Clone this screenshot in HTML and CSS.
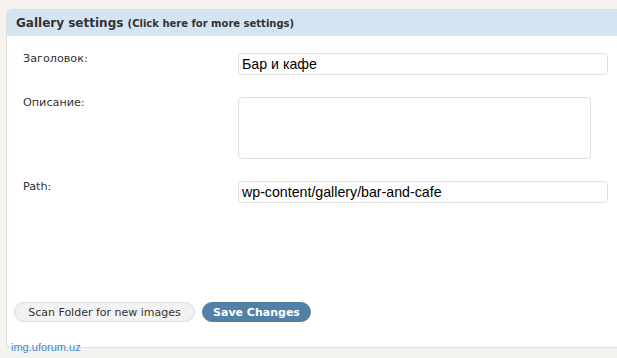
FILE: index.html
```
<!DOCTYPE html>
<html lang="ru">
<head>
  <meta charset="UTF-8" />
  <title>Gallery settings</title>
  <link rel="stylesheet" href="styles.css">
</head>
<body>
  <div class="box">
    <h3 class="box-head">Gallery settings <small>(Click here for more settings)</small></h3>
    <div class="form">
      <label class="label">Заголовок:</label>
      <input class="field" type="text" value="Бар и кафе">
      <label class="label">Описание:</label>
      <textarea class="area"></textarea>
      <label class="label">Path:</label>
      <input class="field" type="text" value="wp-content/gallery/bar-and-cafe">
    </div>
    <div class="actions">
      <button class="btn scan-btn">Scan Folder for new images</button>
      <button class="btn save-btn">Save Changes</button>
    </div>
  </div>
  <div class="watermark">img.uforum.uz</div>
</body>
</html>
```

FILE: styles.css
```
* { margin: 0; padding: 0; box-sizing: border-box; }
html, body {
  height: 100%;
  overflow: hidden;
}
body {
  background: #f5f3ee;
  font-family: "DejaVu Sans", Verdana, sans-serif;
  color: #333;
  padding: 9px 0 0 6px;
  position: relative;
}
.box {
  background: white;
  border: 1px solid #dfdfdf;
  border-right: none;
  border-radius: 6px 0 0 6px;
  padding-bottom: 25px;
}
.box-head {
  background: #d5e4f1;
  height: 26px;
  line-height: 27px;
  padding-left: 9px;
  font-size: 12px;
  font-weight: bold;
  color: #333;
  border-radius: 5px 0 0 0;
}
.box-head small { font-size: 10px; }
.form {
  display: grid;
  grid-template-columns: 215px 370px;
  row-gap: 22px;
  padding: 17px 0 0 16px;
}
.label {
  font-size: 11.2px;
  color: #333;
  margin-top: -1px;
}
.field, .area {
  border: 1px solid #dfdfdf;
  border-radius: 4px;
  background: white;
  font-family: "Liberation Sans", Arial, sans-serif;
  font-size: 14.2px;
  color: #000;
}
.field {
  height: 22px;
  padding: 0 3px;
  width: 370px;
}
.area {
  width: 353px;
  height: 62px;
  resize: none;
}
.actions {
  display: flex;
  gap: 7px;
  padding: 99px 0 0 7px;
}
.btn {
  height: 20px;
  border-radius: 10px;
  font-family: "DejaVu Sans", Verdana, sans-serif;
  font-size: 11px;
  padding: 0 8px;
}
.scan-btn {
  background: #f2f2f2;
  border: 1px solid #dcdcdc;
  color: #333;
  width: 181px;
}
.save-btn {
  background: #5280a6;
  border: 1px solid #5280a6;
  color: white;
  font-weight: bold;
  width: 109px;
}
.watermark {
  position: absolute;
  left: 11px;
  top: 341px;
  font-family: "Liberation Sans", Arial, sans-serif;
  font-size: 11px;
  color: #3f8ad6;
}
```
